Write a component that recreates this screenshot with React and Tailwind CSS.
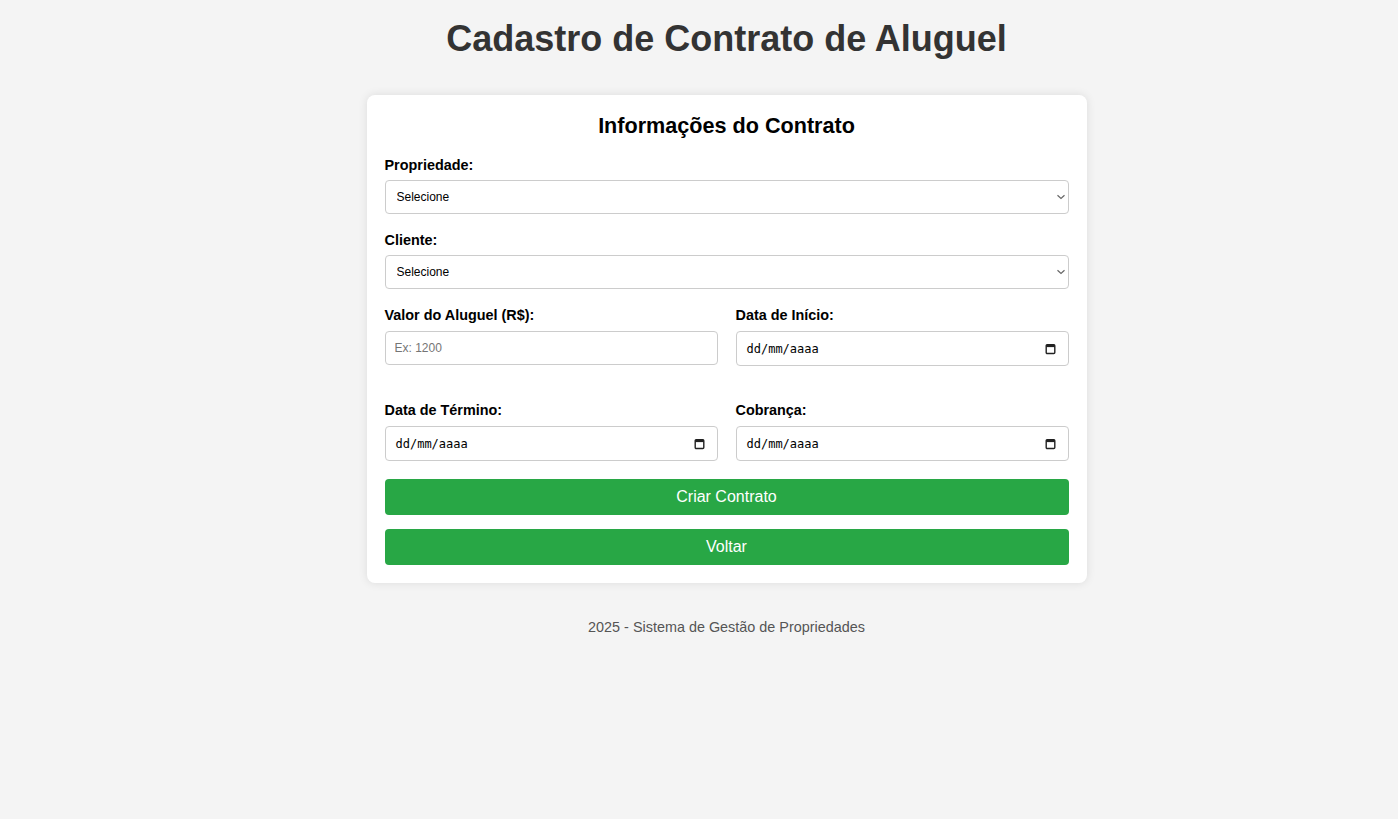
import React from "react";

const font = { fontFamily: '"Liberation Sans", Arial, sans-serif' };

function Chevron() {
  return (
    <svg width="10" height="6" viewBox="0 0 10 6" className="absolute right-[3px] top-[14px] pointer-events-none">
      <path d="M1.5 1.3 L5 4.5 L8.5 1.3" fill="none" stroke="#666" strokeWidth="1.2" />
    </svg>
  );
}

function Calendar() {
  return (
    <svg width="11" height="12" viewBox="0 0 11 12" className="shrink-0">
      <rect x="1.2" y="1.7" width="8.6" height="8.8" rx="1" fill="none" stroke="#222" strokeWidth="1.4" />
      <rect x="1.2" y="1.7" width="8.6" height="2.4" fill="#222" />
    </svg>
  );
}

function Select() {
  return (
    <div className="relative">
      <select className="appearance-none w-full h-[34px] border border-[#cccccc] rounded-[4px] bg-white pl-[11px] pr-6 text-[12px] text-black outline-none" style={font} defaultValue="">
        <option value="">Selecione</option>
      </select>
      <Chevron />
    </div>
  );
}

function DateBox() {
  return (
    <div className="h-[35px] border border-[#cccccc] rounded-[4px] bg-white flex items-center justify-between pl-[10px] pr-[12px]">
      <span className="text-[12px] text-black" style={{ fontFamily: '"DejaVu Sans Mono", "Liberation Mono", monospace' }}>dd/mm/aaaa</span>
      <Calendar />
    </div>
  );
}

function Label({ children }) {
  return <div className="text-[14.4px] font-bold text-black leading-[16px] mb-[7px]">{children}</div>;
}

function GLabel({ children }) {
  return <div className="text-[14.4px] font-bold text-black leading-[16px] mb-[8px]">{children}</div>;
}

export default function App() {
  return (
    <div className="min-h-[819px] bg-[#f4f4f4] flex flex-col items-center pl-[55px]" style={font}>
      <h1 className="text-[36px] font-bold text-[#333333] leading-[41px] mt-[18px]">Cadastro de Contrato de Aluguel</h1>
      <div className="mt-[36px] w-[720px] bg-white rounded-[8px] shadow-[0_0_10px_rgba(0,0,0,0.1)] px-[18px] pt-[18px] pb-[18px]">
        <h2 className="text-[21.6px] font-bold text-black text-center leading-[25px] mb-[19px]">Informações do Contrato</h2>
        <Label>Propriedade:</Label>
        <Select />
        <div className="h-[18px]" />
        <Label>Cliente:</Label>
        <Select />
        <div className="h-[18px]" />
        <div className="grid grid-cols-2 gap-x-[18px] gap-y-[36px]">
          <div>
            <GLabel>Valor do Aluguel (R$):</GLabel>
            <input type="text" placeholder="Ex: 1200" className="w-full h-[34px] border border-[#cccccc] rounded-[4px] bg-white px-[9px] text-[12px] placeholder:text-[#757575] outline-none" style={font} />
          </div>
          <div>
            <GLabel>Data de Início:</GLabel>
            <DateBox />
          </div>
          <div>
            <GLabel>Data de Término:</GLabel>
            <DateBox />
          </div>
          <div>
            <GLabel>Cobrança:</GLabel>
            <DateBox />
          </div>
        </div>
        <button className="mt-[18px] w-full h-[36px] bg-[#28a745] text-white text-[16px] rounded-[4px] flex items-center justify-center">Criar Contrato</button>
        <button className="mt-[14px] w-full h-[36px] bg-[#28a745] text-white text-[16px] rounded-[4px] flex items-center justify-center">Voltar</button>
      </div>
      <p className="mt-[36px] text-[14.4px] text-[#555555] leading-[16px]">2025 - Sistema de Gestão de Propriedades</p>
    </div>
  );
}
